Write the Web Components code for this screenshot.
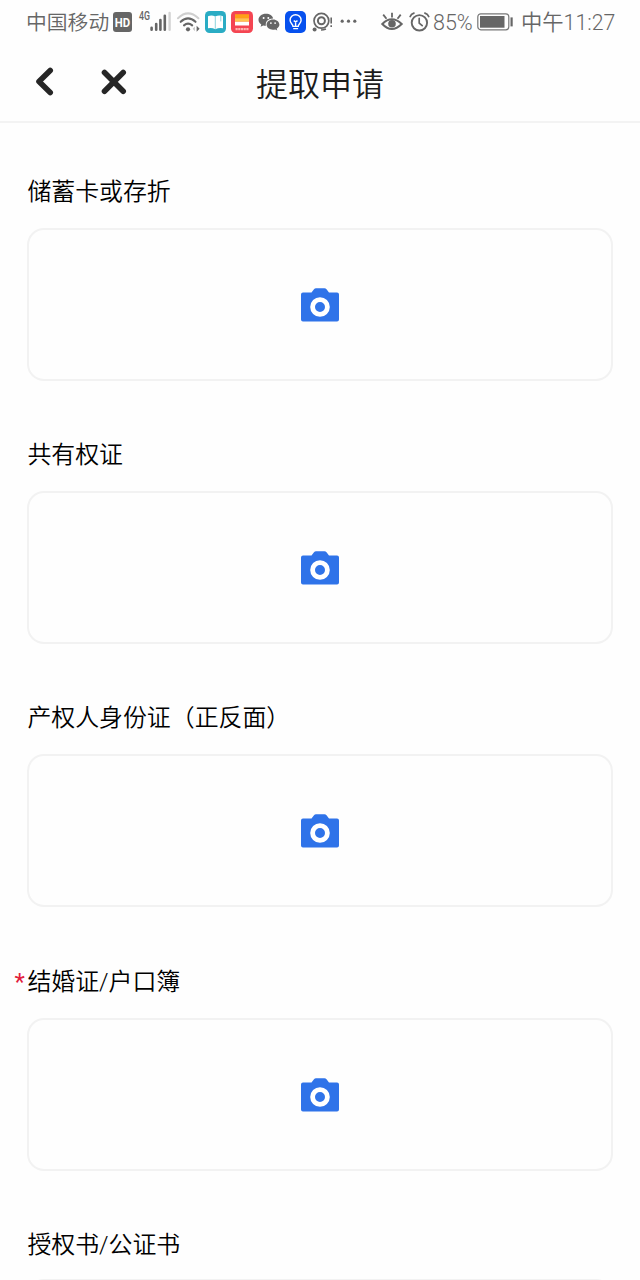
<!DOCTYPE html>
<html lang="zh-CN">
<head>
<meta charset="utf-8">
<meta name="viewport" content="width=device-width, initial-scale=1">
<title>提取申请</title>
<style>
  html, body {
    margin: 0;
    height: 100%;
    overflow: hidden;
    background: #fefefe;
    font-family: Roboto, "Noto Sans CJK SC", sans-serif;
  }
  upload-field:last-child {
    --label-gap: 16.4px;
  }
</style>
</head>
<body>
<withdraw-page>
  <status-bar slot="top" carrier="中国移动" battery="85%" time="中午11:27"></status-bar>
  <nav-bar slot="top">提取申请</nav-bar>
  <upload-field>储蓄卡或存折</upload-field>
  <upload-field>共有权证</upload-field>
  <upload-field>产权人身份证（正反面）</upload-field>
  <upload-field required>结婚证/户口簿</upload-field>
  <upload-field>授权书/公证书</upload-field>
</withdraw-page>

<script>
(function () {
  function define(name, html, setup) {
    const template = document.createElement("template");
    template.innerHTML = html;
    customElements.define(name, class extends HTMLElement {
      constructor() {
        super();
        this.attachShadow({ mode: "open" }).appendChild(template.content.cloneNode(true));
      }
      connectedCallback() {
        if (setup) setup(this, this.shadowRoot);
      }
    });
  }

  // ---- Icons: [width, height, markup] ----
  const ICONS = {
    hd: [19, 20, `<rect width="19" height="20" rx="3" fill="#666"/>
      <text x="9.5" y="14.8" text-anchor="middle" textLength="15.4" lengthAdjust="spacingAndGlyphs" font-family="Roboto" font-size="13.5" font-weight="700" fill="#fff">HD</text>`],
    signal: [33, 22, `<text x="0" y="10.8" textLength="11" lengthAdjust="spacingAndGlyphs" font-family="Roboto" font-size="12.5" font-weight="500" fill="#666">4G</text>
      <path d="M12.6 18.8v1.9M17.2 15v5.7M21.4 11v9.7M25.8 6.8v13.9" stroke="#666" stroke-width="2.6" stroke-linecap="round"/>
      <path d="M30.6 4v16.7" stroke="#d4d4d4" stroke-width="2.4" stroke-linecap="round"/>`],
    wifi: [23, 20, `<g fill="none" stroke-linecap="round" stroke-width="2.1">
      <path d="M1 6.2Q11-3.4 21.4 6.2" stroke="#cfcfcf"/>
      <path d="M3.7 9.8Q11 3 18.5 9.8M7 13.4Q11 9.9 15.2 13.4" stroke="#666"/></g>
      <circle cx="11" cy="17.3" r="2.1" fill="#666"/><path d="M19.6 13.8l3 3-3 3z" fill="#666"/><path d="M17.9 14.4l-2.2 2.4 2.2 2.4z" fill="#c5c5c5"/>`],
    book: [21, 22, `<rect width="21" height="22" rx="4.5" fill="#2aacc4"/>
      <path d="M3 5.2Q7 3.6 10.2 5.6Q13.7 3.8 18 5.2V17.2Q14 16.4 10.3 18.2Q7 16.4 3 17.2Z" fill="#fff"/>
      <path d="M10.3 5.5v12.3M15.8 4.4v6" fill="none" stroke="#81ced9" stroke-width=".9"/>`],
    news: [22, 22, `<rect width="22" height="22" rx="4.5" fill="#f44552"/>
      <path d="M4 3.2h14v4H4z" fill="#ff9f18"/><path d="M4 7.2h14v3.6H4z" fill="#ffc54f"/><path d="M4 10.8h14v3.7H4z" fill="#fff"/>
      <path d="M4.5 18.2h13" stroke="#ffb5b0" stroke-width="2.2" stroke-dasharray="2.2 .5"/>`],
    wechat: [22, 18, `<path d="M8 .8C3.6.8.5 3.5.5 6.8c0 2 1.1 3.6 2.8 4.7l-.7 2.2 2.6-1.3c.9.3 1.8.4 2.7.4-.8-4.4 2.7-7.5 7.3-7.3C14.5 2.7 11.7.8 8 .8z" fill="#666"/>
      <path d="M15 6.4c-3.8 0-6.4 2.3-6.4 5.2 0 3 2.8 5.2 6.4 5.2.8 0 1.5-.1 2.2-.3l2.1 1.1-.6-1.9c1.7-1 2.7-2.4 2.7-4.1 0-2.9-2.8-5.2-6.4-5.2z" fill="#666"/>
      <g fill="#fff"><circle cx="5.6" cy="5" r="1"/><circle cx="10.3" cy="5" r="1"/><circle cx="12.9" cy="10.1" r=".9"/><circle cx="17.1" cy="10.1" r=".9"/></g>`],
    bulb: [21, 22, `<rect width="21" height="22" rx="5" fill="#0650ee"/>
      <path d="M8 15.4c0-2-2.9-3-2.9-6.2a5.5 5.5 0 0 1 11 0c0 3.2-2.9 4.2-2.9 6.2zM8.2 17.6h4.9M10.6 15V10M8.7 9.6l1.9 1.3 1.9-1.3" fill="none" stroke="#fff" stroke-width="1.4"/>`],
    camera: [23, 21, `<g fill="none" stroke="#666"><circle cx="9.4" cy="8.8" r="7.4" stroke-width="1.7"/><circle cx="9.4" cy="8.8" r="3.5" stroke-width="2"/>
      <path d="M9 18Q11.5 18 14 17" stroke-width="1.4"/><path d="M19.2 5.6v6M19.2 13.2v1.9" stroke-width="1.6"/></g><circle cx="2.6" cy="17.6" r="2" fill="#666"/>`],
    more: [17, 4, `<g fill="#666"><circle cx="2.2" cy="1.2" r="1.6"/><circle cx="8.5" cy="1.2" r="1.6"/><circle cx="14.8" cy="1.2" r="1.6"/></g>`],
    eye: [22, 20, `<path d="M1.3 12Q10.7 2.6 20.7 12Q10.7 22 1.3 12Z" fill="none" stroke="#666" stroke-width="2"/>
      <circle cx="11" cy="11.7" r="3.8" fill="#666"/><path d="M11 5.5V.8M5.5 6.8L2.2 2.6M16.5 6.8l3.2-4.2" stroke="#666" stroke-width="1.8"/>`],
    alarm: [21, 20, `<g fill="none" stroke="#666" stroke-linecap="round"><circle cx="10.4" cy="10.8" r="7.7" stroke-width="1.9"/>
      <path d="M10.2 6.4v4.7l3 2.6" stroke-width="1.7"/><path d="M1.2 4.5Q2.1 1.9 4.9 1.1M15.9 1.1Q18.7 1.9 19.7 4.5" stroke-width="1.8"/></g>`],
    battery: [37, 18, `<rect x=".8" y=".8" width="31" height="16" rx="3" fill="none" stroke="#777" stroke-width="1.2"/>
      <rect x="3" y="3" width="24.5" height="11.7" fill="#666"/><path d="M34.6 4.4v9" stroke="#666" stroke-width="2.2"/>`]
  };

  define("ui-icon", `
    <style>
      :host { display: block; flex: none; }
      svg { display: block; overflow: visible; }
    </style>
    <svg></svg>
  `, (el, root) => {
    const [w, h, markup] = ICONS[el.getAttribute("name")];
    const svg = root.querySelector("svg");
    svg.setAttribute("width", w);
    svg.setAttribute("height", h);
    svg.setAttribute("viewBox", `0 0 ${w} ${h}`);
    svg.innerHTML = markup;
  });

  // ---- Status bar ----
  define("status-bar", `
    <style>
      :host {
        display: flex;
        align-items: center;
        justify-content: space-between;
        height: 44px;
        padding: 0 25px 0 26px;
        box-sizing: border-box;
        color: #666;
        font-size: 21px;
        font-weight: 350;
        line-height: 44px;
        white-space: nowrap;
      }
      .group { display: flex; align-items: center; }
      .apps { display: flex; align-items: center; gap: 5px; margin-left: 5px; }
      span { padding-top: 2px; line-height: 42px; }
      #carrier { width: 84px; margin-right: 3px; font-size: 20.8px; }
      #battery { width: 40px; margin: 0 4px 0 3px; font-size: 21.5px; }
      #time { width: 94px; margin-left: 7px; font-size: 21.3px; }
      .signal { margin: -4px 0 0 7px; }
    </style>
    <div class="group">
      <span id="carrier"></span>
      <ui-icon name="hd"></ui-icon>
      <ui-icon class="signal" name="signal"></ui-icon>
      <div class="apps">
        <ui-icon name="wifi"></ui-icon>
        <ui-icon name="book"></ui-icon>
        <ui-icon name="news"></ui-icon>
        <ui-icon name="wechat"></ui-icon>
        <ui-icon name="bulb"></ui-icon>
        <ui-icon name="camera" style="margin-left:1px"></ui-icon>
        <ui-icon name="more"></ui-icon>
      </div>
    </div>
    <div class="group">
      <ui-icon name="eye"></ui-icon>
      <ui-icon name="alarm" style="margin-left:6px"></ui-icon>
      <span id="battery"></span>
      <ui-icon name="battery"></ui-icon>
      <span id="time"></span>
    </div>
  `, (el, root) => {
    ["carrier", "battery", "time"].forEach((key) => {
      root.getElementById(key).textContent = el.getAttribute(key);
    });
  });

  // ---- Title bar ----
  define("nav-bar", `
    <style>
      :host {
        display: grid;
        grid-template-columns: 1fr auto 1fr;
        align-items: center;
        height: 79px;
        box-sizing: border-box;
        border-bottom: 2px solid #f3f3f3;
        color: #1c1c1c;
      }
      .actions { display: flex; align-items: center; gap: 46px; padding: 0 0 2px 35px; }
      button { padding: 0; border: 0; background: none; color: inherit; }
      svg { display: block; }
      path { fill: none; stroke: #262626; stroke-width: 5.6; stroke-linecap: round; stroke-linejoin: round; }
      h1 { margin: 0; padding-top: 4px; font-size: 32px; font-weight: 350; line-height: 48px; }
    </style>
    <div class="actions">
      <button aria-label="返回"><svg width="20" height="29"><path d="M15.2 3.5L4 14.5l11.2 11"/></svg></button>
      <button aria-label="关闭"><svg width="26" height="26"><path d="M3.5 3.5l18.7 18.7M22.2 3.5L3.5 22.2"/></svg></button>
    </div>
    <h1><slot></slot></h1>
  `);

  // ---- Upload field: label with a photo box ----
  define("upload-field", `
    <style>
      :host {
        display: flex;
        flex-direction: column;
        gap: var(--label-gap, 18px);
        color: #000;
        font-size: 23.9px;
        font-weight: 350;
        line-height: 36px;
      }
      .label { display: flex; padding-left: .4px; white-space: nowrap; }
      .star { display: none; width: 13px; margin-left: -13px; color: #e2203c; font-weight: 400; }
      :host([required]) .star { display: block; }
      .box {
        display: flex;
        align-items: center;
        justify-content: center;
        height: 153px;
        box-sizing: border-box;
        border: 2px solid #f2f2f2;
        border-radius: 17px;
      }
      svg { display: block; padding-top: 1px; }
    </style>
    <div class="label"><span class="star">*</span><span><slot></slot></span></div>
    <div class="box">
      <svg width="38" height="34" viewBox="0 0 38 34">
        <path d="M2 4.6h8.5L13 1.2Q13.8.3 15 .3h8.5q1.2 0 2 .9L28 4.6h8q2 0 2 2v25q0 2-2 2H2q-2 0-2-2v-25q0-2 2-2z" fill="#2f73e9"/>
        <circle cx="19" cy="19" r="7.4" fill="#2f73e9" stroke="#fff" stroke-width="4.8"/>
      </svg>
    </div>
  `);

  define("withdraw-page", `
    <style>
      :host { display: block; height: 100%; overflow: hidden; }
      main { display: flex; flex-direction: column; gap: 56.2px; padding: 51px 27px 0; }
    </style>
    <slot name="top"></slot>
    <main><slot></slot></main>
  `);
})();
</script>
</body>
</html>
